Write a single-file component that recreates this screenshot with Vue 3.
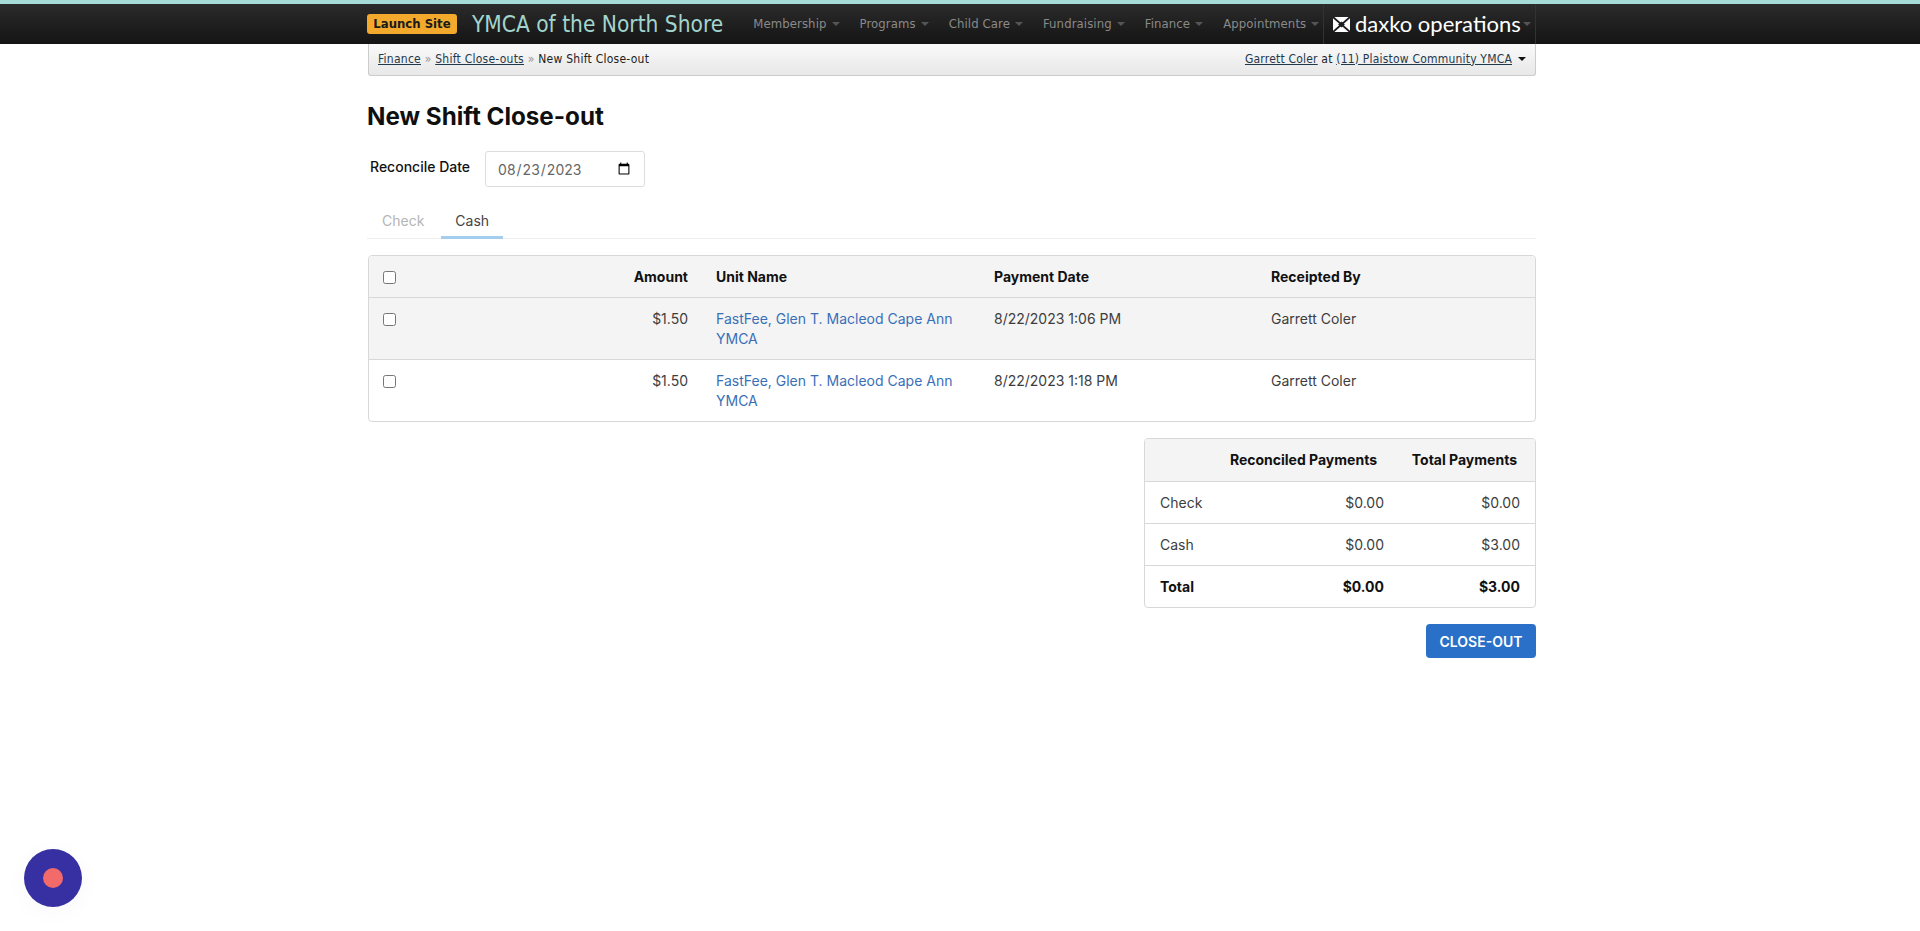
<template>
  <div class="page">
    <header class="topbar">
      <span class="launch">Launch Site</span>
      <span class="org">YMCA of the North Shore</span>
      <nav class="nav">
        <a v-for="item in navItems" :key="item" class="nav__item">{{ item }}<i class="caret"></i></a>
      </nav>
      <div class="brand">
        <svg class="brand__icon" viewBox="0 0 17 15" width="17" height="15">
          <rect width="17" height="15" rx="1.5" fill="#fff" />
          <path stroke="#1c1c1c" stroke-width="1.8" fill="none" d="M0 0l17 15M17 0L0 15" />
          <path fill="#1c1c1c" d="M8.5 4.6l3.4 2.9-3.4 2.9-3.4-2.9z" />
        </svg>
        <span class="brand__text">daxko operations</span>
        <i class="caret"></i>
      </div>
    </header>

    <div class="crumbs">
      <div class="crumbs__path">
        <a>Finance</a> <span class="sep">»</span> <a>Shift Close-outs</a> <span class="sep">»</span> New Shift Close-out
      </div>
      <div class="crumbs__user">
        <a>Garrett Coler</a> at <a>(11) Plaistow Community YMCA</a>
        <i class="caret caret--dark"></i>
      </div>
    </div>

    <main class="content">
      <h1 class="title">New Shift Close-out</h1>

      <div class="date-row">
        <label class="date-row__label" for="reconcile">Reconcile Date</label>
        <input id="reconcile" class="date-row__input" type="date" value="2023-08-23" />
      </div>

      <div class="tabs">
        <span class="tab tab--off">Check</span>
        <span class="tab tab--on">Cash</span>
      </div>

      <div class="box">
        <table class="grid">
          <colgroup>
            <col style="width: 40px" />
            <col style="width: 293px" />
            <col style="width: 278px" />
            <col style="width: 277px" />
            <col />
          </colgroup>
          <thead>
            <tr>
              <th><input type="checkbox" /></th>
              <th class="right">Amount</th>
              <th>Unit Name</th>
              <th>Payment Date</th>
              <th>Receipted By</th>
            </tr>
          </thead>
          <tbody>
            <tr v-for="(row, i) in payments" :key="i" :class="{ shaded: i === 0 }">
              <td><input type="checkbox" /></td>
              <td class="right">{{ row.amount }}</td>
              <td><a class="link">{{ row.unit }}</a></td>
              <td>{{ row.date }}</td>
              <td>{{ row.by }}</td>
            </tr>
          </tbody>
        </table>
      </div>

      <div class="box box--summary">
        <table class="grid summary">
          <colgroup>
            <col />
            <col style="width: 188px" />
            <col style="width: 136px" />
          </colgroup>
          <thead>
            <tr>
              <th></th>
              <th class="right head-a">Reconciled Payments</th>
              <th class="right head-b">Total Payments</th>
            </tr>
          </thead>
          <tbody>
            <tr v-for="row in totals" :key="row.label" :class="{ strong: row.label === 'Total' }">
              <td>{{ row.label }}</td>
              <td class="right">{{ row.reconciled }}</td>
              <td class="right">{{ row.total }}</td>
            </tr>
          </tbody>
        </table>
      </div>

      <div class="actions">
        <button class="btn" type="button">CLOSE-OUT</button>
      </div>
    </main>

    <div class="bubble"><span class="bubble__dot"></span></div>
  </div>
</template>

<script setup>
const navItems = ['Membership', 'Programs', 'Child Care', 'Fundraising', 'Finance', 'Appointments']

const payments = [
  { amount: '$1.50', unit: 'FastFee, Glen T. Macleod Cape Ann YMCA', date: '8/22/2023 1:06 PM', by: 'Garrett Coler' },
  { amount: '$1.50', unit: 'FastFee, Glen T. Macleod Cape Ann YMCA', date: '8/22/2023 1:18 PM', by: 'Garrett Coler' },
]

const totals = [
  { label: 'Check', reconciled: '$0.00', total: '$0.00' },
  { label: 'Cash', reconciled: '$0.00', total: '$3.00' },
  { label: 'Total', reconciled: '$0.00', total: '$3.00' },
]
</script>

<style>
html, body {
  background: #fff;
}
</style>

<style scoped>
.page {
  min-height: 931px;
  font-family: Inter, "Liberation Sans", sans-serif;
  font-size: 14px;
  line-height: 20px;
  color: #3d3d3d;
}

.topbar {
  display: flex;
  align-items: center;
  height: 40px;
  padding: 0 384px 0 367px;
  border-top: 4px solid #a5dcd7;
  background: linear-gradient(#2b2b2b, #141414);
  font-family: "DejaVu Sans Condensed", "DejaVu Sans", sans-serif;
}

.launch {
  width: 90px;
  height: 20px;
  border-radius: 3px;
  background: #f2a92c;
  color: #1a1a1a;
  font-size: 13px;
  font-weight: 700;
  line-height: 20px;
  text-align: center;
}

.org {
  margin-left: 15px;
  color: #a3d5cf;
  font-size: 22.5px;
}

.nav {
  display: flex;
  gap: 20px;
  margin-left: 30px;
}

.nav__item {
  display: flex;
  align-items: center;
  color: #8a8a8a;
  font-size: 13px;
  letter-spacing: 0.1px;
}

.caret {
  width: 0;
  height: 0;
  margin-left: 5px;
  border-top: 4px solid #555;
  border-left: 4px solid transparent;
  border-right: 4px solid transparent;
}

.caret--dark {
  display: inline-block;
  margin-left: 6px;
  vertical-align: 2px;
  border-top-color: #111;
}

.brand {
  display: flex;
  align-items: center;
  margin-left: auto;
  width: 213px;
  height: 40px;
  padding-left: 9px;
  box-sizing: border-box;
  border-left: 1px solid #333;
  border-right: 1px solid #333;
}

.brand__icon {
  flex: none;
}

.brand__text {
  margin-left: 5px;
  color: #fff;
  font-family: Lato, sans-serif;
  font-size: 22px;
  font-weight: 400;
  white-space: nowrap;
}

.brand .caret {
  margin-left: 2px;
}

.crumbs {
  display: flex;
  justify-content: space-between;
  align-items: center;
  margin: 0 384px 0 368px;
  padding: 0 9px 2px 9px;
  height: 29px;
  border: 1px solid #ccc;
  border-top: 0;
  border-radius: 0 0 3px 3px;
  background: linear-gradient(#f9f9f9, #e8e8e8);
  font-family: "DejaVu Sans Condensed", "DejaVu Sans", sans-serif;
  font-size: 12px;
  letter-spacing: 0.25px;
  color: #222;
}

.crumbs__user {
  letter-spacing: 0.2px;
}

.crumbs a {
  color: #1f3a4d;
  text-decoration: underline;
}

.sep {
  color: #999;
}

.content {
  margin: 0 384px 0 368px;
}

.title {
  margin: 0 0 0 -1px;
  padding-top: 26px;
  color: #0f0f0f;
  font-size: 24.2px;
  font-weight: 700;
  line-height: 30px;
}

.date-row {
  display: flex;
  margin-top: 19px;
}

.date-row__label {
  margin: 6px 15px 0 2px;
  color: #111;
  font-weight: 500;
}

.date-row__input {
  box-sizing: border-box;
  width: 160px;
  height: 36px;
  padding: 0 11px;
  border: 1px solid #ddd;
  border-radius: 3px;
  background: #fff;
  color: #666;
  font-family: inherit;
  font-size: 14px;
}

.tabs {
  display: flex;
  gap: 2px;
  margin: 18px 0 0 -1px;
  border-bottom: 1px solid #eee;
}

.tab {
  padding: 6px 15px 5px;
}

.tab--off {
  color: #b5b5b5;
}

.tab--on {
  margin-bottom: -1px;
  padding: 6px 14px 5px;
  border-bottom: 3px solid #a5cdf0;
  color: #444;
}

.box {
  margin-top: 16px;
  border: 1px solid #d8d8d8;
  border-radius: 4px;
  overflow: hidden;
}

.box--summary {
  width: 390px;
  margin-left: auto;
  margin-top: 16px;
}

.grid {
  width: 100%;
  border-collapse: collapse;
  table-layout: fixed;
}

.grid th,
.grid td {
  padding: 10.5px 14px;
  vertical-align: top;
  text-align: left;
}

.grid th {
  background: #f4f4f4;
  color: #111;
  font-weight: 700;
}

.grid tbody tr {
  border-top: 1px solid #d8d8d8;
}

.grid input {
  width: 13px;
  height: 13px;
  margin: 4px 0 0;
  display: block;
}

.grid .right {
  text-align: right;
}

.shaded {
  background: #f4f4f4;
}

.link {
  color: #3a6fb8;
}

.summary th,
.summary td {
  padding-left: 15px;
  padding-right: 15px;
}

.summary th {
  padding-top: 11px;
  padding-bottom: 11px;
}

.summary .head-a {
  padding-left: 0;
  padding-right: 22px;
  white-space: nowrap;
}

.summary .head-b {
  padding-left: 0;
  padding-right: 18px;
  white-space: nowrap;
}

.strong td {
  color: #111;
  font-weight: 700;
}

.actions {
  display: flex;
  justify-content: flex-end;
  margin-top: 16px;
}

.btn {
  width: 110px;
  height: 34px;
  border: 0;
  border-radius: 4px;
  background: #2a70c8;
  color: #fff;
  font-family: inherit;
  font-size: 14px;
  font-weight: 600;
}

.bubble {
  position: fixed;
  left: 24px;
  top: 849px;
  display: flex;
  align-items: center;
  justify-content: center;
  width: 58px;
  height: 58px;
  border-radius: 50%;
  background: #3730a3;
  box-shadow: 0 4px 24px rgba(0, 0, 0, 0.03);
}

.bubble__dot {
  width: 20px;
  height: 20px;
  border-radius: 50%;
  background: #f26a6a;
}
</style>
